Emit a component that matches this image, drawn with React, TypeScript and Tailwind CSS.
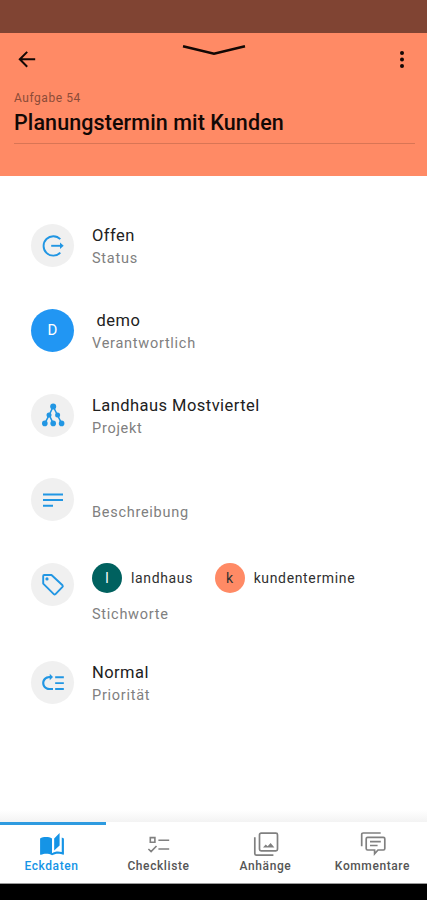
import type { ReactNode } from 'react';
import { MdAutoStories } from 'react-icons/md';

type RowProps = {
  icon: ReactNode;
  label: string;
  children?: ReactNode;
  filled?: boolean;
  className?: string;
};

function Row({ icon, label, children, filled, className = 'h-[84.7px]' }: RowProps) {
  return (
    <div className={`flex items-start ${className}`}>
      <div
        className={`flex h-[43px] w-[43px] shrink-0 items-center justify-center rounded-full text-[#2196e3] ${filled ? 'bg-[#2196f3]' : 'bg-[#f0f0f0]'}`}
      >
        {icon}
      </div>
      <div className="ml-[18px]">
        {children}
        <div className="text-[14.5px] leading-[22px] tracking-[0.73px] text-[#808080]">{label}</div>
      </div>
    </div>
  );
}

function Value({ children }: { children?: ReactNode }) {
  return (
    <div className="h-[24px] whitespace-pre text-[16.5px] leading-[24px] tracking-[0.45px] text-[#212121]">
      {children}
    </div>
  );
}

function Tag({ letter, name, color }: { letter: string; name: string; color: string }) {
  return (
    <div className="flex items-center gap-[9px]">
      <span className={`flex h-[30px] w-[30px] items-center justify-center rounded-full text-[14px] ${color}`}>
        {letter}
      </span>
      <span className="text-[14px] tracking-[0.65px] text-[#303030]">{name}</span>
    </div>
  );
}

function StatusIcon() {
  return (
    <svg width="24" height="24" viewBox="0 0 24 24" fill="none" stroke="currentColor" strokeWidth="1.9">
      <path d="M19.3 5.2A9.7 9.7 0 1 0 19.3 18.6" />
      <path d="M10.2 11.8H21" />
      <path d="M19 8.6l3.7 3.2-3.7 3.2z" fill="currentColor" stroke="none" />
    </svg>
  );
}

function ProjectIcon() {
  return (
    <svg width="24" height="24" viewBox="0 0 24 24" fill="currentColor">
      <path d="M12.2 3.5L8.2 12 3.8 20.4M12.2 3.5L16.4 12l4.2 8.4M8.2 12l4 8.4" fill="none" stroke="currentColor" strokeWidth="1.6" />
      <circle cx="12.2" cy="3.6" r="3" />
      <circle cx="8" cy="12" r="2.5" />
      <circle cx="16.6" cy="12" r="2.5" />
      <circle cx="3.8" cy="20.4" r="2.8" />
      <circle cx="12.2" cy="20.4" r="2.8" />
      <circle cx="20.6" cy="20.4" r="2.8" />
    </svg>
  );
}

function NotesIcon() {
  return (
    <svg width="24" height="24" viewBox="0 0 24 24" fill="none" stroke="currentColor" strokeWidth="2">
      <path d="M2 6.4h20M2 12.1h20M2 17.8h10" />
    </svg>
  );
}

function TagIcon() {
  return (
    <svg width="24" height="24" viewBox="0 0 24 24" fill="none" stroke="currentColor" strokeWidth="1.9" strokeLinejoin="round">
      <path d="M3.2 2h7.3l11 10.3q.7.8 0 1.6l-7 7.2q-.9.8-1.7 0L2.2 10.6V3q0-1 1-1z" />
      <circle cx="6" cy="5.9" r="1.6" fill="currentColor" stroke="none" />
    </svg>
  );
}

function PriorityIcon() {
  return (
    <svg width="26" height="26" viewBox="0 0 24 24" fill="currentColor">
      <path
        transform="matrix(1 0 0 -1 0 23.5)"
        d="M14 5h8v1.8h-8zm0 5.5h8v1.8h-8zm0 5.5h8v1.8h-8zM2 11.5C2 15.08 4.92 18 8.5 18H9v2l3-3-3-3v2h-.5C6.02 16 4 13.98 4 11.5S6.02 7 8.5 7H12V5H8.5C4.92 5 2 7.92 2 11.5z"
      />
    </svg>
  );
}

function ChecklistIcon() {
  return (
    <svg width="26" height="26" viewBox="0 0 26 26" fill="none" stroke="currentColor" strokeWidth="1.6">
      <path d="M4.3 5.6h4.6v4.6H4.3zM12.4 8.3h10.8M12.4 17h10.8M2.4 17l2.7 2.6 5.4-5.6" />
    </svg>
  );
}

function ImagesIcon() {
  return (
    <svg width="26" height="26" viewBox="0 0 26 26" fill="none" stroke="currentColor" strokeWidth="1.7">
      <rect x="6.5" y="1.2" width="18" height="17.6" rx="1.6" />
      <path d="M1.8 5.2v16.4q0 1.6 1.6 1.6h17" />
      <path d="M10 15.4l2.7-3 2 1.9 2.9-3.3 3.8 4.4z" fill="currentColor" stroke="none" />
    </svg>
  );
}

function CommentsIcon() {
  return (
    <svg width="26" height="26" viewBox="0 0 26 26" fill="none" stroke="currentColor" strokeWidth="1.7">
      <path d="M1.7 14.2V2.6Q1.7 1 3.3 1h17.4" />
      <path d="M7.6 5.4h15.8q1.4 0 1.4 1.4v9.8q0 1.4-1.4 1.4h-5.4l-3.4 3.8V18h-7q-1.4 0-1.4-1.4V6.8q0-1.4 1.4-1.4z" />
      <path d="M10 9.6h10.8M10 13.5h7.6" />
    </svg>
  );
}

const tabs = [
  { name: 'Eckdaten', icon: <MdAutoStories size={26} />, active: true },
  { name: 'Checkliste', icon: <ChecklistIcon />, active: false },
  { name: 'Anhänge', icon: <ImagesIcon />, active: false },
  { name: 'Kommentare', icon: <CommentsIcon />, active: false },
];

export default function App() {
  return (
    <div className="flex h-[900px] w-[427px] flex-col overflow-hidden bg-white font-['Roboto',sans-serif]">
      <div className="h-[33px] shrink-0 bg-[#804433]" />

      <header className="h-[143px] shrink-0 bg-[#ff8a65] pr-3 pl-[14px] text-[#120805]">
        <div className="flex h-[52px] items-center justify-between">
          <svg className="ml-[3px] shrink-0" width="20" height="20" viewBox="0 0 20 20" fill="none" stroke="currentColor" strokeWidth="2">
            <path d="M18.2 10.3H3.2M10.2 2.9L2.8 10.3l7.4 7.4" />
          </svg>
          <svg className="-mt-[18px] -ml-[1px]" width="64" height="12" viewBox="0 0 64 12" fill="none" stroke="currentColor" strokeWidth="2.6">
            <path d="M1 2.3l31 7.4 31-7.4" />
          </svg>
          <svg className="mr-[3px]" width="20" height="20" viewBox="0 0 20 20" fill="currentColor">
            <circle cx="10" cy="3.9" r="2" />
            <circle cx="10" cy="10.4" r="2" />
            <circle cx="10" cy="16.9" r="2" />
          </svg>
        </div>
        <div className="mt-[5px] text-[12px] leading-[16px] tracking-[0.55px] text-[#8c4c38]">Aufgabe 54</div>
        <div className="border-b border-[#d97555] pt-[3px] pb-[7px] text-[21.5px] leading-[27px] font-medium tracking-[0.1px]">
          Planungstermin mit Kunden
        </div>
      </header>

      <main className="flex-1 pt-[48.3px] pl-[31px]">
        <Row icon={<StatusIcon />} label="Status">
          <Value>Offen</Value>
        </Row>
        <Row icon={<span className="text-[15px] text-white">D</span>} label="Verantwortlich" filled>
          <Value> demo</Value>
        </Row>
        <Row icon={<ProjectIcon />} label="Projekt">
          <Value>Landhaus Mostviertel</Value>
        </Row>
        <Row icon={<NotesIcon />} label="Beschreibung">
          <Value />
        </Row>
        <Row icon={<TagIcon />} label="Stichworte" className="h-[98px]">
          <div className="mb-[11px] flex gap-[21.5px]">
            <Tag letter="l" name="landhaus" color="bg-[#00615f] text-white" />
            <Tag letter="k" name="kundentermine" color="bg-[#ff8a65] text-[#303030]" />
          </div>
        </Row>
        <Row icon={<PriorityIcon />} label="Priorität">
          <Value>Normal</Value>
        </Row>
      </main>

      <div className="h-3 shrink-0 bg-linear-to-b from-white to-[#f3f3f3]" />
      <nav className="shrink-0 border-b border-[#9a9a9a] bg-white">
        <div className="h-[3px] w-[106px] bg-[#2e9be0]" />
        <div className="-ml-[2px] grid h-[58px] w-[428px] grid-cols-4">
          {tabs.map((tab) => (
            <div
              key={tab.name}
              className={`flex flex-col items-center pt-[7px] ${tab.active ? 'text-[#1594e6]' : 'text-[#808080]'}`}
            >
              {tab.icon}
              <span className={`text-[12px] leading-[16px] font-medium tracking-[0.6px] ${tab.active ? '' : 'text-[#555555]'}`}>
                {tab.name}
              </span>
            </div>
          ))}
        </div>
      </nav>
      <div className="h-4 shrink-0 bg-black" />
    </div>
  );
}
